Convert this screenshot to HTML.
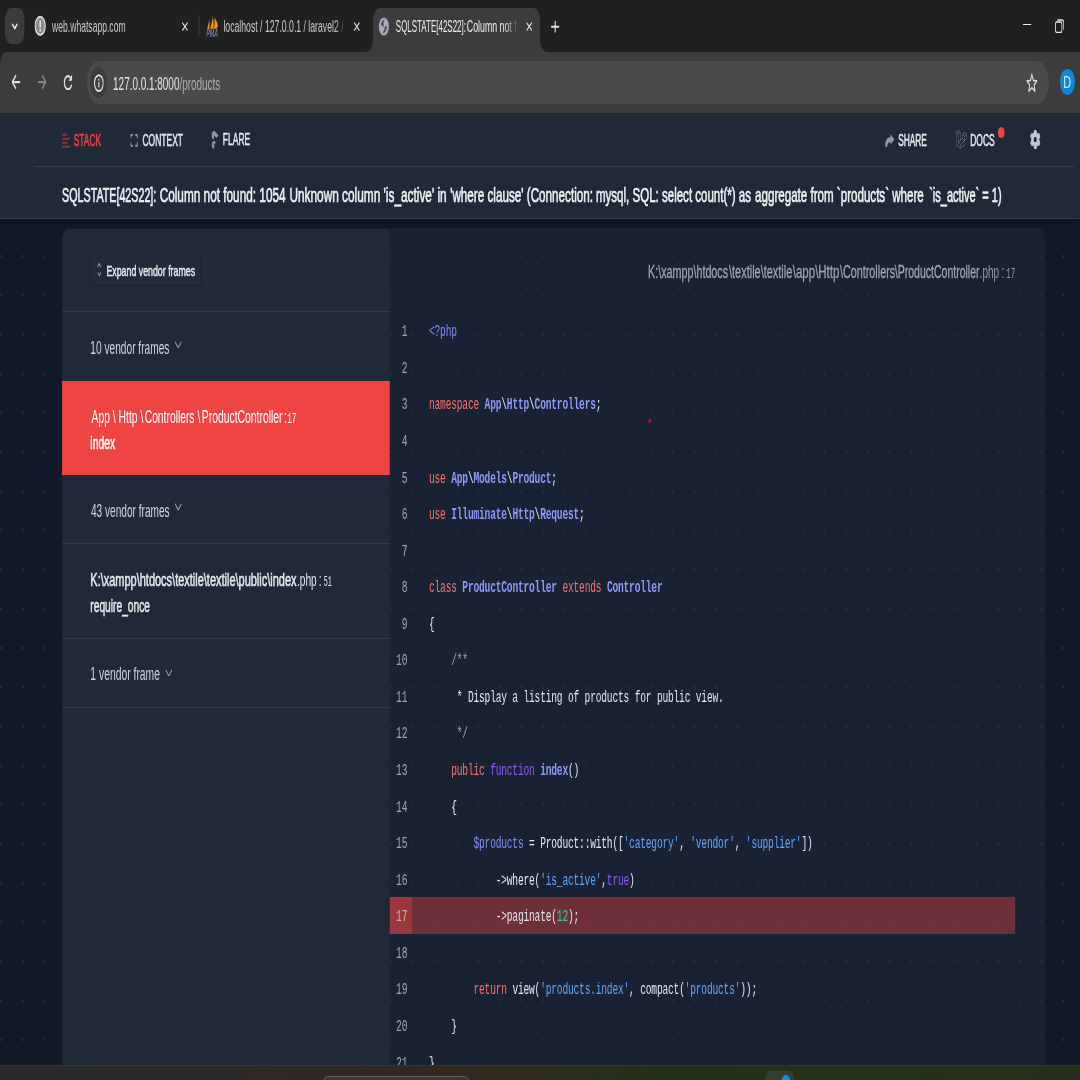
<!DOCTYPE html>
<html lang="en"><head><meta charset="utf-8"><title>SQLSTATE[42S22]: Column not found</title>
<style>
html,body{margin:0;padding:0;width:1080px;height:1080px;overflow:hidden;background:#111827}
#w{position:absolute;left:0;top:0;width:1948.05px;height:1080px;overflow:hidden;transform:scaleX(0.5544);transform-origin:0 0;background:#111827;font-family:"Liberation Sans",sans-serif}
#w div,#w svg{position:absolute;box-sizing:border-box}
.t{white-space:nowrap;}
.t span{white-space:pre}
#code div.l{left:773.81px;height:36.5px;white-space:pre;font:400 17.3px/24px "Liberation Mono",monospace;letter-spacing:-0.345px;color:#e5e7eb}
#code div.n{right:1213.56px;height:36.5px;white-space:pre;font:400 17.3px/24px "Liberation Mono",monospace;letter-spacing:-0.345px;color:#a0a7b4;text-align:right}
.k{color:#f87171} .v{color:#818cf8} .c{color:#8e99f8;font-weight:700} .f{color:#8b5cf6} .s{color:#60a5fa} .d{color:#34d399} .g{color:#9ca3af}
</style></head><body><div id="w">
<div id="page" style="left:0;top:113.4px;width:1948.05px;height:952px;background-color:#111827;background-image:radial-gradient(circle at 50% 50%, rgba(255,255,255,.072) 0, rgba(255,255,255,.072) 1.3px, rgba(255,255,255,0) 2.1px);background-size:39.1px 39.18px;background-position:21.6px 6.21px"></div><div id="tabstrip" style="left:0;top:0;width:1948.05px;height:70px;background:#1f2020"></div><div id="toolbar" style="left:0;top:52px;width:1948.05px;height:61.4px;background:#3c3c3c;border-top-left-radius:12px"></div><div style="left:9.02px;top:8px;width:35.35px;height:35.8px;border-radius:11px;background:#3b3b3b"></div><svg style="left:21.46px;top:22.5px" width="11.18" height="7" viewBox="0 0 11 7"><path d="M1 1 L5.5 5.5 L10 1" fill="none" stroke="#f0f0f0" stroke-width="2"/></svg><svg style="left:62.05px;top:15.2px" width="20.92" height="21.7" viewBox="0 0 22 22"><circle cx="11" cy="11" r="9.6" fill="#8a8a8a" stroke="#dedede" stroke-width="2.2"/><rect x="9.8" y="5.2" width="2.4" height="7.6" fill="#f2f2f2"/><rect x="9.8" y="14.4" width="2.4" height="2.5" fill="#f2f2f2"/></svg><div id="tab1" class="t" style="left:93.63px;transform-origin:0 50%;top:15px;font:400 15.64px/24px 'Liberation Sans',sans-serif;color:#c9c9c9;transform:scaleX(0.9903);">web.whatsapp.com</div><svg style="left:327.91px;top:21.7px" width="11.2" height="9.2" viewBox="0 0 11.2 9.2"><path d="M0.8 0.6 L10.4 8.6 M10.4 0.6 L0.8 8.6" stroke="#dedede" stroke-width="1.55" fill="none"/></svg><div style="left:357.5px;top:15px;width:2px;height:20.6px;background:#3d3d3d"></div><svg style="left:371.57px;top:15.4px" width="21.83" height="21.6" viewBox="0 0 22 22"><defs><linearGradient id="sg" x1="0" y1="0" x2="0" y2="1"><stop offset="0" stop-color="#c97d1c"/><stop offset=".45" stop-color="#f5a02c"/><stop offset="1" stop-color="#ff9a14"/></linearGradient></defs><path d="M5.3 3.8 C5.9 7.4 6 10.4 5.8 13.9 L1.6 13.9 C3.6 10.6 4.8 7.4 5.3 3.8 Z" fill="url(#sg)"/><path d="M12.1 0.5 C13.2 5 13.6 9.4 13.3 13.9 L7.2 13.9 C9.6 9.8 11.2 5.4 12.1 0.5 Z" fill="url(#sg)"/><path d="M15.3 2.6 C18.4 5.4 20.8 8.6 21.9 12 C20.6 12 19.6 12.4 19.4 13.9 L14.2 13.9 C15 10.2 15.5 6.4 15.3 2.6 Z" fill="#f8961a"/><text transform="translate(0 22.4) scale(0.9 1)" font-family="Liberation Sans, sans-serif" font-weight="700" font-style="italic" font-size="10.9" fill="#7078b0">PMA</text></svg><div id="tab2" class="t" style="left:403.15px;transform-origin:0 50%;top:15px;font:400 15.64px/24px 'Liberation Sans',sans-serif;color:#c9c9c9;transform:scaleX(1.0022);-webkit-mask-image:linear-gradient(90deg,#000 0,#000 93%,rgba(0,0,0,.25) 100%);mask-image:linear-gradient(90deg,#000 0,#000 93%,rgba(0,0,0,.25) 100%);">localhost / 127.0.0.1 / laravel2 /</div><svg style="left:638.34px;top:21.7px" width="11.2" height="9.2" viewBox="0 0 11.2 9.2"><path d="M0.8 0.6 L10.4 8.6 M10.4 0.6 L0.8 8.6" stroke="#dedede" stroke-width="1.55" fill="none"/></svg><div style="left:672.8px;top:7.6px;width:301.23px;height:46px;background:#3c3c3c;border-radius:12px 12px 0 0"></div><svg style="left:658.8px;top:38px" width="15" height="14" viewBox="0 0 15 14"><path d="M14 0 L15 0 L15 14 L0 14 C8 14 14 9 14 0 Z" fill="#3c3c3c"/></svg><svg style="left:973.03px;top:38px" width="15" height="14" viewBox="0 0 15 14"><path d="M0 0 L1 0 C1 9 7 14 15 14 L0 14 Z" fill="#3c3c3c"/></svg><svg style="left:683.44px;top:16.8px" width="18.76" height="19" viewBox="0 0 20 20"><circle cx="10" cy="10" r="9.7" fill="#a2aab7"/><path d="M11.6 2.6 C8.2 3 5 5.6 4.6 8.8 C6.4 8.6 8.6 9.2 10 10.6 C10.6 9.4 9.6 8 8.8 7 C9.4 5.2 10.4 3.8 11.6 2.6 Z" fill="#3c3c3c"/><path d="M15.4 9.2 C15.6 13 13 16.4 9 17.2 C8.4 16.2 9 15 10 14.6 C11.6 14 12 12.6 11.2 11.4 C12.4 10.2 14 9.6 15.4 9.2 Z" fill="#3c3c3c"/></svg><div id="tab3a" class="t" style="left:713.66px;transform-origin:0 50%;top:15px;font:400 15.64px/24px 'Liberation Sans',sans-serif;color:#ececec;transform:scaleX(0.9197);">SQLSTATE[42S22]:</div><div id="tab3b" class="t" style="left:841.91px;transform-origin:0 50%;top:15px;font:400 15.64px/24px 'Liberation Sans',sans-serif;color:#ececec;transform:scaleX(1.0155);-webkit-mask-image:linear-gradient(90deg,#000 0,#000 76%,rgba(0,0,0,.12) 100%);mask-image:linear-gradient(90deg,#000 0,#000 76%,rgba(0,0,0,.12) 100%);">Column not f</div><svg style="left:948.58px;top:21.7px" width="11.2" height="9.2" viewBox="0 0 11.2 9.2"><path d="M0.8 0.6 L10.4 8.6 M10.4 0.6 L0.8 8.6" stroke="#dedede" stroke-width="1.55" fill="none"/></svg><svg style="left:994.23px;top:21.2px" width="14.97" height="11.4" viewBox="0 0 15 11.4"><path d="M7.5 0 V11.4 M0 5.7 H15" stroke="#e6e6e6" stroke-width="2" fill="none"/></svg><div style="left:1845.06px;top:24px;width:14.97px;height:1.3px;background:#f0f0f0"></div><svg style="left:1902.6px;top:18.8px" width="16.59" height="14.2" viewBox="0 0 16.6 14.2"><rect x="0.8" y="3" width="11.6" height="10.4" rx="2.2" fill="none" stroke="#e8e8e8" stroke-width="1.5"/><path d="M4.2 0.9 H12.6 C14.4 0.9 15.8 2.2 15.8 4 V10.6" fill="none" stroke="#e8e8e8" stroke-width="1.5"/></svg><svg style="left:20.74px;top:74px" width="15.87" height="16" viewBox="0 -0.45 16 16"><path d="M8 0.8 L1.2 7.6 L8 14.4 M1.2 7.6 H15.6" stroke="#dcdcdc" stroke-width="2.3" fill="none"/></svg><svg style="left:67.64px;top:74px" width="15.87" height="16" viewBox="0 -0.45 16 16"><path d="M8 0.8 L14.8 7.6 L8 14.4 M14.8 7.6 H0.4" stroke="#858585" stroke-width="2.3" fill="none"/></svg><svg style="left:113.64px;top:74px" width="17.32" height="16.4" viewBox="0 -0.1 17.4 16.4"><path d="M14.6 5.2 A6.7 6.7 0 1 0 15.3 10.4" stroke="#dcdcdc" stroke-width="2.3" fill="none"/><path d="M9.8 6.6 H16.2 V0.2 Z" fill="#dcdcdc"/></svg><div style="left:156.75px;top:60.6px;width:1735.39px;height:43.7px;border-radius:22px;background:#4a4a4a"></div><div style="left:162.79px;top:67.2px;width:30.66px;height:31px;border-radius:50%;background:#3c3c3c"></div><svg style="left:168.83px;top:73.6px" width="18.58" height="18.2" viewBox="0 0 18.6 18.2"><circle cx="9.3" cy="9.1" r="7.9" fill="none" stroke="#e4e4e4" stroke-width="2"/><rect x="8.3" y="8" width="2" height="5.4" fill="#e4e4e4"/><rect x="8.3" y="4.6" width="2" height="2.1" fill="#e4e4e4"/></svg><div id="url" class="t" style="left:204.29px;transform-origin:0 50%;top:72px;font:400 18.1px/24px 'Liberation Sans',sans-serif;color:#e6e6e6;transform:scaleX(0.9906);">127.0.0.1:8000<span style="color:#aeaeae">/products</span></div><svg style="left:1850.65px;top:72.8px" width="20.56" height="19.4" viewBox="0 0 20.4 19.4"><path d="M10.2 1.6 L12.7 7.4 L19 7.9 L14.2 12 L15.7 18.1 L10.2 14.8 L4.7 18.1 L6.2 12 L1.4 7.9 L7.7 7.4 Z" fill="none" stroke="#dadada" stroke-width="1.8" stroke-linejoin="miter"/></svg><div style="left:1912.34px;top:69px;width:26.52px;height:25.8px;border-radius:50%;background:#0f86d6"></div><div id="av" class="t" style="left:1918.24px;transform-origin:0 50%;top:71px;font:400 15.64px/24px 'Liberation Sans',sans-serif;color:#d8ecfb;transform:scaleX(1.2633);">D</div><div id="nav" style="left:0;top:113.4px;width:1948.05px;height:105.2px;background:#1f2937;box-shadow:0 3px 8px rgba(0,0,0,.22);border-bottom:1px solid #323d4f"></div><div style="left:61.33px;top:165.6px;width:1875.45px;height:1.2px;background:#333e4f"></div><svg style="left:112.28px;top:133px" width="14.2" height="15" viewBox="0 -0.5 14.2 15" fill="#8c353c"><rect x="0" y="0.2" width="9.2" height="2"/><rect x="0" y="4.3" width="14.2" height="2"/><rect x="0" y="8.3" width="9.2" height="2"/><rect x="0" y="12.2" width="14.2" height="2"/></svg><div id="stack" class="t" style="left:132.58px;transform-origin:0 50%;top:129px;font:400 15.64px/24px 'Liberation Sans',sans-serif;color:#ef4444;transform:scaleX(0.9674);-webkit-text-stroke:0.55px #ef4444;">STACK</div><svg style="left:235.21px;top:134px" width="13.53" height="12.8" viewBox="0 0 13.5 12.8"><path d="M1 4.2 V1 H4.6 M8.9 1 H12.5 V4.2 M12.5 8.6 V11.8 H8.9 M4.6 11.8 H1 V8.6" fill="none" stroke="#8e97a6" stroke-width="1.9"/></svg><div id="context" class="t" style="left:256.59px;transform-origin:0 50%;top:129px;font:400 15.64px/24px 'Liberation Sans',sans-serif;color:#e5e7eb;transform:scaleX(0.9785);-webkit-text-stroke:0.55px #e5e7eb;">CONTEXT</div><svg style="left:381.49px;top:129.8px" width="14.5" height="20" viewBox="0 0 14.5 20"><path d="M5.06 0.45 L13.33 5.59 L9.32 7.95 L5.5 5.5 L4.7 9.3 L0.8 8.09 L0.8 3.09 Z" fill="#8f97a5"/><path d="M5.31 10.59 L8.82 12.53 L5.81 14.2 L5.3 19.2 L1.05 17.26 L1.05 12.53 Z" fill="#848c9b"/></svg><div id="flare" class="t" style="left:401.79px;transform-origin:0 50%;top:128px;font:400 15.64px/24px 'Liberation Sans',sans-serif;color:#e5e7eb;transform:scaleX(0.9763);-webkit-text-stroke:0.55px #e5e7eb;">FLARE</div><svg style="left:1595.78px;top:133.5px" width="17.32" height="13.8" viewBox="0 0 17.2 13.8"><path d="M10 0 L17.2 5.4 L10 10.8 V7.9 C6.8 7.9 4.8 9.4 3.6 13.7 L1.3 13.7 C-0.3 8 3 3.1 10 2.9 Z" fill="#8e97a6"/></svg><div id="share" class="t" style="left:1620.32px;transform-origin:0 50%;top:129px;font:400 15.64px/24px 'Liberation Sans',sans-serif;color:#e5e7eb;transform:scaleX(0.9657);-webkit-text-stroke:0.55px #e5e7eb;">SHARE</div><svg style="left:1723.85px;top:130.2px" width="20.02" height="18.9" viewBox="0 0 24 24" preserveAspectRatio="none"><path d="M23.642 5.43a.364.364 0 01.014.1v5.149c0 .135-.073.26-.189.326l-4.323 2.49v4.934a.378.378 0 01-.188.326L9.93 23.949a.316.316 0 01-.066.027c-.008.002-.016.008-.024.01a.348.348 0 01-.192 0c-.011-.002-.02-.008-.03-.012-.02-.008-.042-.014-.062-.025L.533 18.755a.376.376 0 01-.189-.326V2.974c0-.033.005-.066.014-.098.003-.012.01-.02.014-.032a.369.369 0 01.023-.058c.004-.013.015-.022.023-.033l.033-.045c.012-.01.025-.018.037-.027.014-.012.027-.024.041-.034H.53L5.043.05a.375.375 0 01.375 0L9.93 2.647h.002c.015.01.027.021.04.033l.038.027c.013.014.02.03.033.045.008.011.02.021.025.033.01.02.017.038.024.058.003.011.01.021.013.032.01.031.014.064.014.098v9.652l3.76-2.164V5.527c0-.033.004-.066.013-.098.003-.01.01-.02.013-.032a.487.487 0 01.024-.059c.007-.012.018-.02.025-.033.012-.015.021-.03.033-.043.012-.012.025-.02.037-.028.014-.01.026-.023.041-.032h.001l4.513-2.598a.375.375 0 01.375 0l4.513 2.598c.016.01.027.021.042.031.012.01.025.018.036.028.013.014.022.03.034.044.008.012.019.021.024.033.011.02.018.04.024.06.006.01.012.021.015.032zm-.74 5.032V6.179l-1.578.908-2.182 1.256v4.283zm-4.51 7.75v-4.287l-2.147 1.225-6.126 3.498v4.325zM1.093 3.624v14.588l8.273 4.761v-4.325l-4.322-2.445-.002-.003H5.04c-.014-.01-.025-.021-.04-.031-.011-.01-.024-.018-.035-.027l-.001-.002c-.013-.012-.021-.025-.031-.04-.01-.011-.021-.022-.028-.036h-.002c-.008-.014-.013-.031-.02-.047-.006-.016-.014-.027-.018-.043a.49.49 0 01-.008-.057c-.002-.014-.006-.027-.006-.041V5.789l-2.18-1.257zM5.23.81L1.47 2.974l3.76 2.164 3.758-2.164zm1.956 13.505l2.182-1.256V3.624l-1.58.91-2.182 1.255v9.435zm11.581-10.95l-3.76 2.163 3.76 2.163 3.759-2.164zm-.376 4.978L16.21 7.087 14.63 6.18v4.283l2.182 1.256 1.58.908zm-8.65 9.654l5.514-3.148 2.756-1.572-3.757-2.163-4.323 2.489-3.941 2.27z" fill="#a4abb8" fill-opacity=".7"/></svg><div id="docs" class="t" style="left:1750.2px;transform-origin:0 50%;top:129px;font:400 15.64px/24px 'Liberation Sans',sans-serif;color:#e5e7eb;transform:scaleX(0.9784);-webkit-text-stroke:0.55px #e5e7eb;">DOCS</div><div style="left:1800.14px;top:127px;width:12.09px;height:11.4px;border-radius:50%;background:#ef4444"></div><svg style="left:1858.23px;top:130.2px" width="18.76" height="19" viewBox="0 0 19 19"><path d="M6.92 2.99 L7.97 0.43 L11.03 0.43 L12.08 2.99 L13.85 4.01 L16.59 3.64 L18.12 6.29 L16.42 8.48 L16.42 10.52 L18.12 12.71 L16.59 15.36 L13.85 14.99 L12.08 16.01 L11.03 18.57 L7.97 18.57 L6.92 16.01 L5.15 14.99 L2.41 15.36 L0.88 12.71 L2.58 10.52 L2.58 8.48 L0.88 6.29 L2.41 3.64 L5.15 4.01 Z M12.80 9.50 A3.3 3.3 0 1 0 6.20 9.50 A3.3 3.3 0 1 0 12.80 9.50 Z" fill="#c3c7cf" fill-rule="evenodd" stroke="#c3c7cf" stroke-width="1.1" stroke-linejoin="round"/></svg><div id="msg0" class="t" style="left:112.3px;transform-origin:0 50%;top:183px;font:400 20.86px/24px 'Liberation Sans',sans-serif;color:#eef0f3;transform:scaleX(0.9258);-webkit-text-stroke:0.7px #eef0f3;">SQLSTATE[42S22]:</div><div id="msg1" class="t" style="left:287.71px;transform-origin:0 50%;top:183px;font:400 20.86px/24px 'Liberation Sans',sans-serif;color:#eef0f3;transform:scaleX(1.0202);-webkit-text-stroke:0.7px #eef0f3;">Column not found: 1054</div><div id="msg2" class="t" style="left:522.19px;transform-origin:0 50%;top:183px;font:400 20.86px/24px 'Liberation Sans',sans-serif;color:#eef0f3;transform:scaleX(1.0245);-webkit-text-stroke:0.7px #eef0f3;">Unknown column 'is_active' in</div><div id="msg3" class="t" style="left:812.14px;transform-origin:0 50%;top:183px;font:400 20.86px/24px 'Liberation Sans',sans-serif;color:#eef0f3;transform:scaleX(1.0107);-webkit-text-stroke:0.7px #eef0f3;">'where clause' (Connection:</div><div id="msg4" class="t" style="left:1074.6px;transform-origin:0 50%;top:183px;font:400 20.86px/24px 'Liberation Sans',sans-serif;color:#eef0f3;transform:scaleX(0.9969);-webkit-text-stroke:0.7px #eef0f3;">mysql, SQL: select count(*) as</div><div id="msg5" class="t" style="left:1362.3px;transform-origin:0 50%;top:183px;font:400 20.86px/24px 'Liberation Sans',sans-serif;color:#eef0f3;transform:scaleX(1.0016);-webkit-text-stroke:0.7px #eef0f3;">aggregate from `products` where</div><div id="msg6" class="t" style="left:1675.7px;transform-origin:0 50%;top:183px;font:400 20.86px/24px 'Liberation Sans',sans-serif;color:#eef0f3;transform:scaleX(0.9507);-webkit-text-stroke:0.7px #eef0f3;">`is_active` = 1)</div><div id="card" style="left:112.18px;top:229px;width:1772.74px;height:840px;border-radius:11px 11px 0 0;overflow:hidden;box-shadow:0 0 0 1px rgba(255,255,255,.025)"><div id="frames" style="left:0;top:0;width:590.38px;height:840px;background:#1f2937"></div><div id="codebg" style="left:590.38px;top:0;width:1182.36px;height:840px;background:rgba(38,50,68,.42)"></div></div><div style="left:164.14px;top:254px;width:196.61px;height:30.8px;border-radius:3px;background:rgba(255,255,255,.008);box-shadow:0 1px 2px rgba(0,0,0,.12),0 0 0 1px rgba(0,0,0,.035)"></div><svg style="left:174.78px;top:262px" width="7.94" height="15.4" viewBox="0 0 8 15.4"><path d="M1 5 L4 1.6 L7 5 M1 10.4 L4 13.8 L7 10.4" fill="none" stroke="#9aa2b0" stroke-width="1.4"/></svg><div id="expand" class="t" style="left:192.11px;transform-origin:0 50%;top:259px;font:400 14.7px/24px 'Liberation Sans',sans-serif;color:#e5e7eb;transform:scaleX(1.0818);-webkit-text-stroke:0.5px #e5e7eb;">Expand vendor frames</div><div style="left:112.18px;top:311px;width:590.38px;height:1px;background:#2e3949"></div><div id="v10" class="t" style="left:162.8px;transform-origin:0 50%;top:336px;font:400 18.25px/24px 'Liberation Sans',sans-serif;color:#d1d5db;transform:scaleX(1.0032);">10 vendor frames</div><svg style="left:315.47px;top:340.70000000000005px" width="13" height="7.8" viewBox="0 0 13 7.8"><path d="M0.7 0.7 L6.5 6.8 L12.3 0.7" fill="none" stroke="#9aa2b0" stroke-width="1.5"/></svg><div style="left:112.18px;top:381.2px;width:590.38px;height:93.8px;background:#ef4444"></div><div id="sl0" class="t" style="left:164.61px;transform-origin:0 50%;top:405px;font:400 18.25px/24px 'Liberation Sans',sans-serif;color:#ffffff;transform:scaleX(1.0246);">App \ Http \</div><div id="sl1" class="t" style="left:260.64px;transform-origin:0 50%;top:405px;font:400 18.25px/24px 'Liberation Sans',sans-serif;color:#ffffff;transform:scaleX(1.0185);">Controllers \</div><div id="sl2" class="t" style="left:364.37px;transform-origin:0 50%;top:405px;font:400 18.25px/24px 'Liberation Sans',sans-serif;color:#ffffff;transform:scaleX(1.0257);">ProductController</div><div id="sl3" class="t" style="left:512.27px;transform-origin:0 50%;top:405px;font:400 18.25px/24px 'Liberation Sans',sans-serif;color:#ffffff;transform:scaleX(1.0);">:</div><div id="sl4" class="t" style="left:518.14px;transform-origin:0 50%;top:407px;font:400 14.6px/24px 'Liberation Mono',monospace;color:#ffffff;transform:scaleX(0.9533);">17</div><div id="sel2" class="t" style="left:163.26px;transform-origin:0 50%;top:431px;font:400 18.25px/24px 'Liberation Sans',sans-serif;color:#ffffff;transform:scaleX(1.0215);-webkit-text-stroke:0.6px #fff;">index</div><div id="v43" class="t" style="left:163.7px;transform-origin:0 50%;top:499px;font:400 18.25px/24px 'Liberation Sans',sans-serif;color:#d1d5db;transform:scaleX(1.0001);">43 vendor frames</div><svg style="left:315.47px;top:503.1px" width="13" height="7.8" viewBox="0 0 13 7.8"><path d="M0.7 0.7 L6.5 6.8 L12.3 0.7" fill="none" stroke="#9aa2b0" stroke-width="1.5"/></svg><div style="left:112.18px;top:543px;width:590.38px;height:1px;background:#2e3949"></div><div id="fq0" class="t" style="left:163.24px;transform-origin:0 50%;top:568px;font:400 18.25px/24px 'Liberation Sans',sans-serif;color:#e5e7eb;transform:scaleX(1.0843);-webkit-text-stroke:0.6px #e5e7eb;">K:\xampp\htdocs\textile\textile\public\index</div><div id="fq1" class="t" style="left:535.72px;transform-origin:0 50%;top:568px;font:400 18.25px/24px 'Liberation Sans',sans-serif;color:#e5e7eb;transform:scaleX(1.0);">.php</div><div id="fq2" class="t" style="left:574.96px;transform-origin:0 50%;top:568px;font:400 18.25px/24px 'Liberation Sans',sans-serif;color:#e5e7eb;transform:scaleX(1.0);">:</div><div id="fq3" class="t" style="left:583.51px;transform-origin:0 50%;top:570px;font:400 14.6px/24px 'Liberation Mono',monospace;color:#e5e7eb;transform:scaleX(0.8333);">51</div><div id="fr2" class="t" style="left:163.25px;transform-origin:0 50%;top:594px;font:400 18.25px/24px 'Liberation Sans',sans-serif;color:#e5e7eb;transform:scaleX(1.0086);-webkit-text-stroke:0.6px #e5e7eb;">require_once</div><div style="left:112.18px;top:638px;width:590.38px;height:1px;background:#2e3949"></div><div id="v1" class="t" style="left:163.25px;transform-origin:0 50%;top:662px;font:400 18.25px/24px 'Liberation Sans',sans-serif;color:#d1d5db;transform:scaleX(1.0225);">1 vendor frame</div><svg style="left:298.15px;top:668.5px" width="13" height="7.8" viewBox="0 0 13 7.8"><path d="M0.7 0.7 L6.5 6.8 L12.3 0.7" fill="none" stroke="#9aa2b0" stroke-width="1.5"/></svg><div style="left:112.18px;top:707px;width:590.38px;height:1px;background:#2e3949"></div><div id="pa0" class="t" style="left:1169.29px;transform-origin:0 50%;top:260px;font:400 18.25px/24px 'Liberation Sans',sans-serif;color:#9ea5b3;transform:scaleX(1.0611);-webkit-text-stroke:0.3px #9ea5b3;">K:\xampp\htdocs</div><div id="pa1" class="t" style="left:1314.5px;transform-origin:0 50%;top:260px;font:400 18.25px/24px 'Liberation Sans',sans-serif;color:#9ea5b3;transform:scaleX(1.0821);-webkit-text-stroke:0.3px #9ea5b3;">\textile\textile</div><div id="pa2" class="t" style="left:1429.94px;transform-origin:0 50%;top:260px;font:400 18.25px/24px 'Liberation Sans',sans-serif;color:#9ea5b3;transform:scaleX(1.1342);-webkit-text-stroke:0.3px #9ea5b3;">\app\Http</div><div id="pa3" class="t" style="left:1514.71px;transform-origin:0 50%;top:260px;font:400 18.25px/24px 'Liberation Sans',sans-serif;color:#9ea5b3;transform:scaleX(1.0678);-webkit-text-stroke:0.3px #9ea5b3;">\Controllers</div><div id="pa4" class="t" style="left:1614.01px;transform-origin:0 50%;top:260px;font:400 18.25px/24px 'Liberation Sans',sans-serif;color:#9ea5b3;transform:scaleX(1.0394);-webkit-text-stroke:0.3px #9ea5b3;">\ProductController</div><div id="pa5" class="t" style="left:1766.6px;transform-origin:0 50%;top:260px;font:400 18.25px/24px 'Liberation Sans',sans-serif;color:#939baa;transform:scaleX(0.9879);">.php</div><div id="pa6" class="t" style="left:1806.46px;transform-origin:0 50%;top:260px;font:400 18.25px/24px 'Liberation Sans',sans-serif;color:#939baa;transform:scaleX(1.0);">:</div><div id="pa7" class="t" style="left:1814.96px;transform-origin:0 50%;top:262px;font:400 14.6px/24px 'Liberation Mono',monospace;color:#939baa;transform:scaleX(0.9322);">17</div><div id="code" style="left:0;top:0;width:100%;height:1065px;overflow:hidden"><div style="left:702.56px;top:897px;width:40.59px;height:36.75px;background:rgba(239,68,68,.61)"></div><div style="left:743.15px;top:897px;width:1087.66px;height:36.75px;background:rgba(239,68,68,.4)"></div><div class="n" style="top:320px;color:#a0a7b4">1</div><div class="l" style="top:320px"><span class="v">&lt;?php</span></div><div class="n" style="top:357px;color:#a0a7b4">2</div><div class="n" style="top:393px;color:#a0a7b4">3</div><div class="l" style="top:393px"><span class="k">namespace</span> <span class="c">App</span>\<span class="c">Http</span>\<span class="c">Controllers</span>;</div><div class="n" style="top:430px;color:#a0a7b4">4</div><div class="n" style="top:467px;color:#a0a7b4">5</div><div class="l" style="top:467px"><span class="k">use</span> <span class="c">App</span>\<span class="c">Models</span>\<span class="c">Product</span>;</div><div class="n" style="top:503px;color:#a0a7b4">6</div><div class="l" style="top:503px"><span class="k">use</span> <span class="c">Illuminate</span>\<span class="c">Http</span>\<span class="c">Request</span>;</div><div class="n" style="top:540px;color:#a0a7b4">7</div><div class="n" style="top:576px;color:#a0a7b4">8</div><div class="l" style="top:576px"><span class="k">class</span> <span class="c">ProductController</span> <span class="k">extends</span> <span class="c">Controller</span></div><div class="n" style="top:613px;color:#a0a7b4">9</div><div class="l" style="top:613px">{</div><div class="n" style="top:649px;color:#a0a7b4">10</div><div class="l" style="top:649px">    <span class="g">/**</span></div><div class="n" style="top:686px;color:#a0a7b4">11</div><div class="l" style="top:686px">     * Display a listing of products for public view.</div><div class="n" style="top:722px;color:#a0a7b4">12</div><div class="l" style="top:722px">     <span class="g">*/</span></div><div class="n" style="top:759px;color:#a0a7b4">13</div><div class="l" style="top:759px">    <span class="k">public</span> <span class="f">function</span> <span class="c">index</span>()</div><div class="n" style="top:796px;color:#a0a7b4">14</div><div class="l" style="top:796px">    {</div><div class="n" style="top:832px;color:#a0a7b4">15</div><div class="l" style="top:832px">        <span class="v">$products</span> = Product::with([<span class="s">'category'</span>, <span class="s">'vendor'</span>, <span class="s">'supplier'</span>])</div><div class="n" style="top:869px;color:#a0a7b4">16</div><div class="l" style="top:869px">            -&gt;where(<span class="s">'is_active'</span>,<span class="f">true</span>)</div><div class="n" style="top:905px;color:#d0aab1">17</div><div class="l" style="top:905px">            -&gt;paginate(<span class="d">12</span>);</div><div class="n" style="top:942px;color:#a0a7b4">18</div><div class="n" style="top:978px;color:#a0a7b4">19</div><div class="l" style="top:978px">        <span class="k">return</span> view(<span class="s">'products.index'</span>, compact(<span class="s">'products'</span>));</div><div class="n" style="top:1015px;color:#a0a7b4">20</div><div class="l" style="top:1015px">    }</div><div class="n" style="top:1052px;color:#a0a7b4">21</div><div class="l" style="top:1052px">}</div></div><div style="left:1169.55px;top:419.4px;width:4.69px;height:3.4px;border-radius:50%;background:#e0101c"></div><div id="taskbar" style="left:0;top:1065px;width:1948.05px;height:15px;background:linear-gradient(90deg,#29292a 0%,#2b2927 22%,#33271f 40%,#2c2c1e 50%,#232f18 62%,#243017 80%,#262e1b 100%);border-top:1px solid #333331"></div><div style="left:580.81px;top:1075.6px;width:266.95px;height:20px;border-radius:12px;background:#3b3735;border:1.4px solid #7a7673"></div><div style="left:1380.77px;top:1070.7px;width:50.51px;height:20px;border-radius:7px 7px 0 0;background:#333d2a;border:1px solid #40493a"></div><div style="left:1409.45px;top:1074.6px;width:16.59px;height:16px;border-radius:50%;background:#0a8de6"></div></div></body></html>
